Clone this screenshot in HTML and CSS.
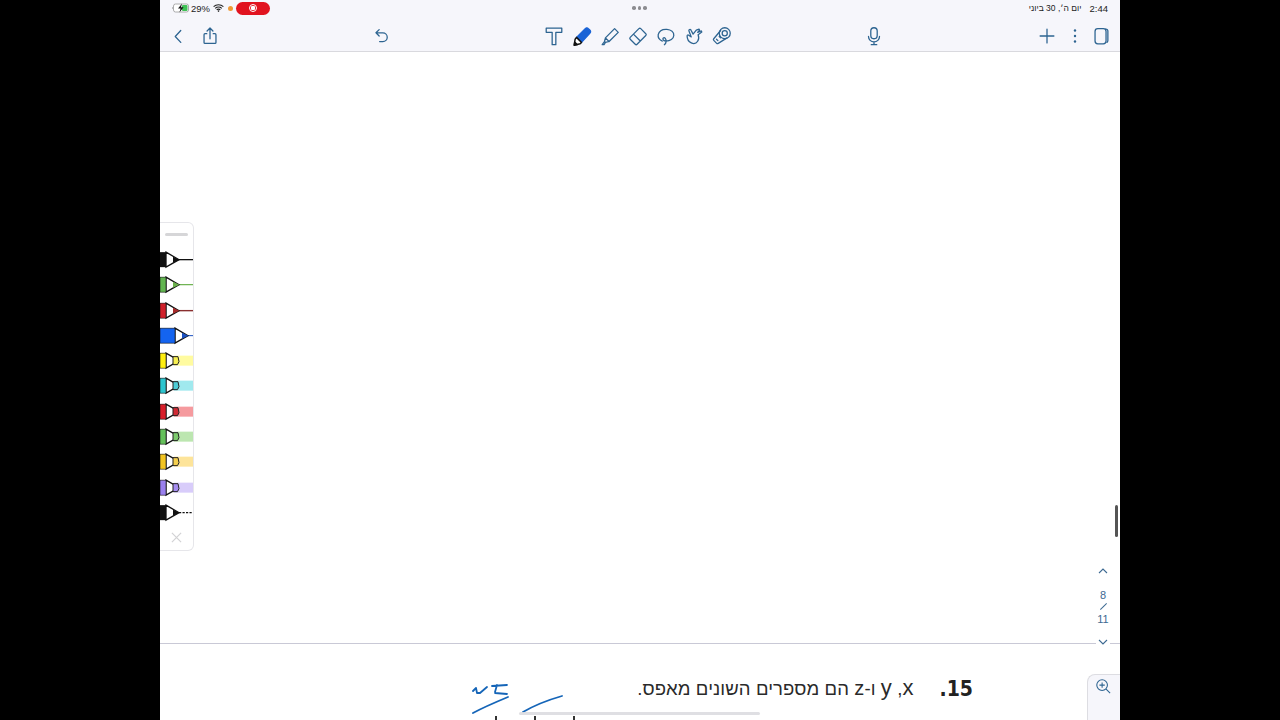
FILE: index.html
```html
<!DOCTYPE html>
<html lang="he">
<head>
<meta charset="utf-8">
<title>Notes</title>
<link rel="stylesheet" href="styles.css">
</head>
<body>
<div class="device">
  <header class="top">
    <div class="status">
      <div class="status-left">
        <svg class="battery" viewBox="0 0 20 10"><path d="M1 5h1" stroke="#888" fill="none"/><rect x="2.500" y="1" width="15" height="8" rx="2" fill="#fff" stroke="#999" stroke-width=".8"/><rect x="11" y="2" width="5.500" height="6" rx="1" fill="#3fc256"/><path d="M11 .5 7 5.600h2.600L8.400 9.600 12.600 4.200H10z" fill="#111"/></svg>
        <span class="pct">29%</span>
        <svg class="wifi" viewBox="0 0 12 9"><path d="M.5 3a8 8 0 0 1 11 0M2.300 4.900a5.400 5.400 0 0 1 7.400 0M4 6.600a2.800 2.800 0 0 1 4 0" fill="none" stroke="#222" stroke-width="1.300"/><circle cx="6" cy="8" r=".9" fill="#222"/></svg>
        <span class="dot-orange"></span>
        <span class="rec"><span class="rec-ring"></span></span>
      </div>
      <div class="grabber"><i></i><i></i><i></i></div>
      <div class="status-right"><span class="date">יום ה׳, 30 ביוני</span><span class="time">2:44</span></div>
    </div>
    <nav class="toolbar">
      <div class="group group-left">
        <svg class="ico" viewBox="0 0 24 24"><path d="M15 6 9 12.500l6 6.500"/></svg>
        <svg class="ico share" viewBox="0 0 24 24"><path d="M8.500 9.500H6.500a1 1 0 0 0-1 1v8.500a1 1 0 0 0 1 1h11a1 1 0 0 0 1-1v-8.500a1 1 0 0 0-1-1h-2M12 15V3.500M8.800 6.500 12 3.300l3.200 3.200"/></svg>
        <svg class="ico undo" viewBox="0 0 24 24"><path d="M10 5 6.500 8.500 10 12M6.500 8.500H14a4.800 4.800 0 0 1 0 9.600h-3.500"/></svg>
      </div>
      <div class="group group-tools">
        <svg class="ico" viewBox="0 0 24 24"><path d="M3.500 3.500h17v4.500h-6.500v13.500h-4V8H3.500z"/></svg>
        <svg class="ico" viewBox="0 0 24 24"><path d="M6 13.500 15.500 4q1.800-1.800 3.500 0l1.500 1.500q1.800 1.800 0 3.500L11.500 19z" fill="#1a63d6" stroke="#1a63d6"/><path d="M6 13.500 11.500 19l-1.500 1.500-6.500 1.500 1-6.500z" fill="#fff" stroke="#111" stroke-width="1.600"/><path d="M3.500 22 4 18.500l3 3z" fill="#111" stroke="#111"/></svg>
        <svg class="ico" viewBox="0 0 24 24"><path d="M7 14 17 4l4 4-10 10zM7 14l-1 4 1 1-1.500 2.500h-2L6 18M11 18l-4 1"/></svg>
        <svg class="ico" viewBox="0 0 24 24"><path d="M3.500 13.500 13 4q1-1 2 0l5.500 5.500q1 1 0 2L11 21q-1 1-2 0l-5.500-5.500q-1-1 0-2zM7 10l7.500 7.500"/></svg>
        <svg class="ico" viewBox="0 0 24 24"><path d="M8 17.500C4.500 16 3 13.500 3.500 10.500 4.500 6.500 8.500 4.500 13 4.800c4.500.4 7.700 3 7.500 6.700-.2 3.500-4 6-8.500 6-2 0-3-1-3.300-2-.4-1.500 1.400-2.300 2.500-1 1.500 1.800 1.300 5.500-1 7"/></svg>
        <svg class="ico" viewBox="0 0 24 24"><path d="M9 13 6.500 6.500a1.200 1.200 0 0 1 2.300-.8L11 10l3.500-4.500 3-1 .5 1-2 2.500 4-1.500.5 1.200-4 3c1 2.500.8 5-.5 7-1.500 2.300-4.500 3-7 1.800-2.500-1.200-4.500-4-4.500-7.500 0-1.200 1-1.500 1.700-.8z"/></svg>
        <svg class="ico" viewBox="0 0 24 24"><circle cx="15" cy="9" r="6"/><circle cx="15" cy="9" r="2.800"/><path d="M10.500 6 3 15q-.8 1 0 1.800l3.200 3.200q.8.800 1.700 0L17.500 14M6 15.500l1.500 1.500M9 12.500l1.500 1.500"/></svg>
      </div>
      <div class="group group-mic">
        <svg class="ico" viewBox="0 0 24 24"><rect x="8.500" y="3" width="7" height="12" rx="3.500"/><path d="M6 12.500a6 6 0 0 0 12 0M12 18.500v3M9 21.500h6"/></svg>
      </div>
      <div class="group group-right">
        <svg class="ico" viewBox="0 0 24 24"><path d="M12 4.500v15M4.500 12h15"/></svg>
        <svg class="ico dots" viewBox="0 0 24 24"><circle cx="12" cy="6" r="1.300"/><circle cx="12" cy="12" r="1.300"/><circle cx="12" cy="18" r="1.300"/></svg>
        <svg class="ico pages" viewBox="0 0 24 24"><path d="M17 4.500a2 2 0 0 1 2.500 2V17a2.500 2.500 0 0 1-1 2"/><rect x="5.500" y="4" width="12" height="16.500" rx="3"/></svg>
      </div>
    </nav>
  </header>

  <main class="page">
    <section class="blank"></section>
    <section class="sheet">
      <p class="question"><span class="q-text" dir="rtl"><span class="latin">x</span>&rlm;, <span class="latin">y</span>&rlm; ו-<span class="latin-z">z</span> הם מספרים השונים מאפס.</span><b class="q-num" dir="rtl">15.</b></p>
    </section>

    <aside class="tray">
      <div class="tray-handle"></div>
      <ul class="pens">
        <li><svg viewBox="0 0 33 25"><path d="M18 12.500H33" stroke="#111" stroke-width="1.300"/><path d="M6 5 19 12.500 6 20z" fill="#fff" stroke="#111" stroke-width="1.300"/><path d="M13 9.500 19.500 12.500 13 15.500z" fill="#111"/><rect y="5" width="6" height="15" fill="#111"/></svg></li>
        <li><svg viewBox="0 0 33 25"><path d="M18 12.500H33" stroke="#6ab04c" stroke-width="1.200"/><path d="M6 5 19 12.500 6 20z" fill="#fff" stroke="#111" stroke-width="1.300"/><path d="M13 9.500 19.500 12.500 13 15.500z" fill="#6ab04c"/><rect y="5" width="6" height="15" fill="#62b550" stroke="#111" stroke-width=".6"/></svg></li>
        <li><svg viewBox="0 0 33 25"><path d="M18 12.500H33" stroke="#8a3030" stroke-width="1.400"/><path d="M6 5 19 12.500 6 20z" fill="#fff" stroke="#111" stroke-width="1.300"/><path d="M13 9.500 19.500 12.500 13 15.500z" fill="#a52a2a"/><rect y="5" width="6" height="15" fill="#d0202a" stroke="#111" stroke-width=".6"/></svg></li>
        <li><svg viewBox="0 0 33 25"><path d="M26 12.500H33" stroke="#1a50c0" stroke-width="1"/><path d="M15 5 28 12.500 15 20z" fill="#fff" stroke="#111" stroke-width="1.300"/><path d="M22 9.500 28.500 12.500 22 15.500z" fill="#1a50c0"/><rect y="5" width="15" height="15" fill="#1464f0" stroke="#111" stroke-width=".6"/></svg></li>
        <li><svg viewBox="0 0 33 25"><rect x="14" y="7.500" width="19" height="10" fill="#fffba0"/><path d="M6 5 14 9.500V15.500L6 20z" fill="#fff" stroke="#111" stroke-width="1.300"/><path d="M13 8.500h5l1 5-1.500 3H13z" fill="#f7ef50" stroke="#222"/><rect y="5" width="6" height="15" fill="#ffef10" stroke="#111" stroke-width=".6"/></svg></li>
        <li><svg viewBox="0 0 33 25"><rect x="14" y="7.500" width="19" height="10" fill="#a0e9ee"/><path d="M6 5 14 9.500V15.500L6 20z" fill="#fff" stroke="#111" stroke-width="1.300"/><path d="M13 8.500h5l1 5-1.500 3H13z" fill="#4ccdd6" stroke="#222"/><rect y="5" width="6" height="15" fill="#2dc5cf" stroke="#111" stroke-width=".6"/></svg></li>
        <li><svg viewBox="0 0 33 25"><rect x="14" y="7.500" width="19" height="10" fill="#f59a9e"/><path d="M6 5 14 9.500V15.500L6 20z" fill="#fff" stroke="#111" stroke-width="1.300"/><path d="M13 8.500h5l1 5-1.500 3H13z" fill="#d02a34" stroke="#222"/><rect y="5" width="6" height="15" fill="#d81e2a" stroke="#111" stroke-width=".6"/></svg></li>
        <li><svg viewBox="0 0 33 25"><rect x="14" y="7.500" width="19" height="10" fill="#bce6b0"/><path d="M6 5 14 9.500V15.500L6 20z" fill="#fff" stroke="#111" stroke-width="1.300"/><path d="M13 8.500h5l1 5-1.500 3H13z" fill="#7ccb6c" stroke="#222"/><rect y="5" width="6" height="15" fill="#64c05a" stroke="#111" stroke-width=".6"/></svg></li>
        <li><svg viewBox="0 0 33 25"><rect x="14" y="7.500" width="19" height="10" fill="#fde49a"/><path d="M6 5 14 9.500V15.500L6 20z" fill="#fff" stroke="#111" stroke-width="1.300"/><path d="M13 8.500h5l1 5-1.500 3H13z" fill="#f5cf4e" stroke="#222"/><rect y="5" width="6" height="15" fill="#f2c420" stroke="#111" stroke-width=".6"/></svg></li>
        <li><svg viewBox="0 0 33 25"><rect x="14" y="7.500" width="19" height="10" fill="#d8ccfa"/><path d="M6 5 14 9.500V15.500L6 20z" fill="#fff" stroke="#111" stroke-width="1.300"/><path d="M13 8.500h5l1 5-1.500 3H13z" fill="#a58cf0" stroke="#222"/><rect y="5" width="6" height="15" fill="#9a80ee" stroke="#111" stroke-width=".6"/></svg></li>
        <li><svg viewBox="0 0 33 25"><path d="M19 12.500H33" stroke="#111" stroke-width="1.300" stroke-dasharray="2.200 1.300"/><path d="M6 5 19 12.500 6 20z" fill="#fff" stroke="#111" stroke-width="1.300"/><path d="M13 9.500 19.500 12.500 13 15.500z" fill="#111"/><rect y="5" width="6" height="15" fill="#111"/></svg></li>
      </ul>
      <svg class="tray-close" viewBox="0 0 12 12"><path d="M1 1l10 10M11 1 1 11"/></svg>
    </aside>

    <div class="scroll-thumb"></div>
    <div class="pager">
      <svg class="chev" viewBox="0 0 10 6"><path d="M1 5 5 1l4 4"/></svg>
      <span class="pg-num">8</span>
      <span class="pg-slash"></span>
      <span class="pg-num">11</span>
      <svg class="chev chev-down" viewBox="0 0 10 6"><path d="M1 1l4 4 4-4"/></svg>
    </div>

    <aside class="zoom-panel">
      <svg class="zoom-ico" viewBox="0 0 18 18"><circle cx="8" cy="8" r="6"/><path d="M8 5v6M5 8h6M12.500 12.500 17 17"/></svg>
    </aside>

    <svg class="ink" viewBox="0 0 110 50">
      <path d="M3 9 6 6 7 11 10 11 17 5M22 4 37 3M27 3 25 10M25 11 37 12M3 31C14 25 26 20 38 15M53 30C65 23 78 18 92 14" fill="none" stroke="#1565b8" stroke-width="1.800" stroke-linecap="round" stroke-linejoin="round"/>
    </svg>
    <div class="cut-line"><i></i><i></i><i></i></div>
    <div class="hscroll"></div>
  </main>
</div>
</body>
</html>
```

FILE: styles.css
```css
* { box-sizing: border-box; }
html, body { margin: 0; height: 100%; }
body {
  background: #000;
  display: flex;
  justify-content: center;
  overflow: hidden;
  font-family: "Liberation Sans", Arial, sans-serif;
}
.device {
  width: 960px;
  height: 720px;
  display: flex;
  flex-direction: column;
  background: #fff;
}
.top {
  background: #f6f6fb;
  border-bottom: 1px solid #d9d9de;
  height: 52px;
  flex: none;
}
.status {
  height: 16px;
  padding: 0 12px 0 11px;
  display: grid;
  grid-template-columns: 1fr auto 1fr;
  align-items: center;
}
.status-left { display: flex; align-items: center; }
.battery { width: 20px; height: 10px; }
.pct { font-size: 9.500px; color: #222; }
.wifi { width: 11px; height: 8px; margin-left: 3px; }
.dot-orange { width: 5px; height: 5px; border-radius: 50%; background: #ee9a35; margin-left: 4px; }
.rec {
  width: 34px; height: 13px; margin-left: 3px;
  background: #e1131f; border-radius: 7px;
  display: flex; align-items: center; justify-content: center;
}
.rec-ring { width: 8px; height: 8px; border-radius: 50%; border: 1px solid #fff; background: radial-gradient(circle, #fff 0 2px, #e1131f 2.500px); }
.grabber { display: flex; gap: 2px; }
.grabber i { width: 3.500px; height: 3.500px; border-radius: 50%; background: #8c8c90; }
.status-right { display: flex; justify-content: flex-end; align-items: center; gap: 8px; font-size: 9.500px; color: #222; }
.date { font-size: 8.500px; direction: rtl; }
.toolbar { height: 35px; display: flex; align-items: center; padding-top: 4px; }
.group { display: flex; align-items: center; }
.ico {
  width: 22px; height: 22px; flex: none;
  fill: none; stroke: #2d6491; stroke-width: 1.400; stroke-linecap: round; stroke-linejoin: round;
}
.group-left { margin-left: 7px; }
.share { margin-left: 10px; }
.undo { margin-left: 149px; }
.group-tools { margin-left: 151px; gap: 6px; }
.group-mic { margin-left: 130px; }
.group-right { margin-left: 151px; gap: 6px; }
.dots { fill: #2d6491; stroke: none; }
.pages { margin-left: -2px; }

.page { flex: 1; position: relative; display: flex; flex-direction: column; overflow: hidden; }
.blank { height: 592px; border-bottom: 1px solid #c9c9d6; flex: none; }
.sheet { flex: 1; }
.question {
  margin: 31px 147px 0 0;
  display: flex;
  justify-content: flex-end;
  align-items: center;
  gap: 26px;
  font-size: 18.500px;
  line-height: 26px;
  color: #2a2a2a;
}
.q-text { letter-spacing: .1px; }
.latin { font-size: 22px; }
.latin-z { font-size: 20px; }
.q-num { font-family: "DejaVu Sans", sans-serif; font-stretch: condensed; font-size: 21px; font-weight: 700; color: #222; }

.tray {
  position: absolute; left: 0; top: 170px;
  width: 34px; height: 329px;
  background: #fff;
  border: 1px solid #e6e6ea; border-left: 0;
  border-radius: 0 6px 6px 0;
  display: flex; flex-direction: column;
}
.tray-handle { width: 23px; height: 3px; background: #d6d6d8; margin: 10px 0 0 5px; border-radius: 2px; flex: none; }
.pens { list-style: none; margin: 11px 0 0; padding: 0; }
.pens li { height: 25.300px; display: block; }
.pens svg { display: block; width: 33px; height: 25.300px; }
.tray-close { width: 11px; height: 11px; margin: 7px 0 0 11px; fill: none; stroke: #d2d2d4; stroke-width: 1.300; flex: none; }

.scroll-thumb { position: absolute; right: 2px; top: 453px; width: 3px; height: 32px; background: #555; border-radius: 2px; }
.pager {
  position: absolute; right: 10px; top: 516px;
  width: 14px;
  background: #fff;
  display: flex; flex-direction: column; align-items: center;
  color: #3d6a92;
}
.chev { width: 10px; height: 6px; flex: none; fill: none; stroke: #3d6a92; stroke-width: 1.100; }
.pg-num { font-size: 11px; line-height: 12px; }
.pg-num:first-of-type { margin-top: 15px; }
.pg-slash { width: 9px; height: 1px; background: #3d6a92; transform: rotate(-45deg); margin: 5px 0 6px; }
.chev-down { margin-top: 14px; }

.zoom-panel {
  position: absolute; right: 0; bottom: 0;
  width: 33px; height: 46px;
  background: #f6f6fb;
  border: 1px solid #dddde2; border-right: 0; border-bottom: 0;
  border-radius: 8px 0 0 0;
  padding: 3px 0 0 7px;
}
.zoom-ico { display: block; width: 16px; height: 16px; fill: none; stroke: #2d6491; stroke-width: 1.200; }
.ink { position: absolute; left: 310px; top: 630px; width: 110px; height: 50px; }
.cut-line { position: absolute; left: 335px; bottom: 0; display: flex; gap: 37px; }
.cut-line i { width: 2px; height: 4px; background: #333; }
.hscroll { position: absolute; left: 359px; bottom: 5px; width: 241px; height: 3px; background: #dcdce0; border-radius: 2px; opacity: .9; }
```
